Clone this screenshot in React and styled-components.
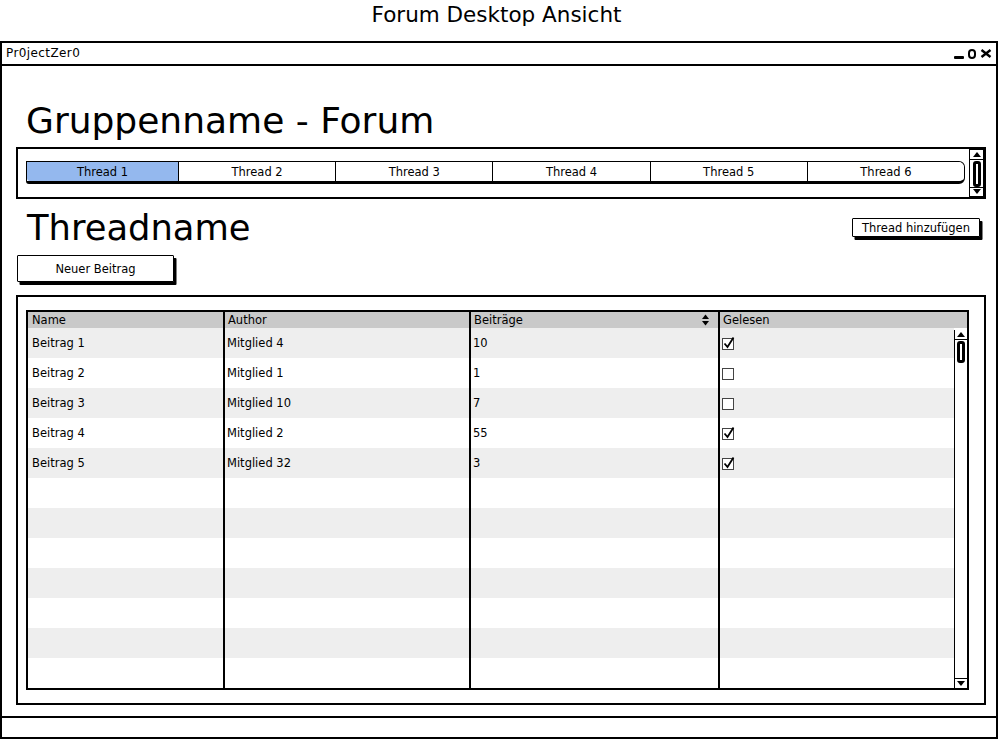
import styled, { createGlobalStyle } from 'styled-components';

const GlobalStyle = createGlobalStyle`
  html, body {
    margin: 0;
    padding: 0;
    background: #fff;
  }
  body {
    width: 1000px;
    height: 741px;
    overflow: hidden;
    font-family: 'DejaVu Sans', sans-serif;
    color: #000;
  }
`;

const Page = styled.div`
  display: flex;
  flex-direction: column;
  width: 1000px;
  height: 741px;
`;

const Caption = styled.div`
  box-sizing: border-box;
  height: 41px;
  padding: 4px 7px 0 0;
  text-align: center;
  font-size: 21.5px;
  line-height: 22px;
`;

const Window = styled.div`
  box-sizing: border-box;
  width: 998px;
  height: 698px;
  border: 2px solid #000;
  display: flex;
  flex-direction: column;
`;

const TitleBar = styled.div`
  height: 21px;
  border-bottom: 2px solid #000;
  display: flex;
  align-items: center;
  justify-content: space-between;
  padding: 0 4px;
  font-size: 12px;
  line-height: 21px;
  letter-spacing: 0.4px;
`;

const Controls = styled.div`
  display: flex;
  align-items: center;
  gap: 4px;
  height: 21px;
`;

const MinBar = styled.span`
  width: 10px;
  height: 3px;
  margin-top: 8px;
  background: #000;
  border-radius: 1px;
`;

const Content = styled.div`
  flex: 1;
  display: flex;
  flex-direction: column;
  padding: 0 10px 0 14px;
`;

const Heading = styled.h1`
  margin: ${(p) => p.$top}px 0 0 ${(p) => p.$left}px;
  font-size: ${(p) => p.$size}px;
  line-height: ${(p) => p.$size}px;
  font-weight: normal;
`;

const TabBox = styled.div`
  box-sizing: border-box;
  height: 52px;
  margin-top: 8px;
  border: 2px solid #000;
  display: flex;
`;

const TabStrip = styled.div`
  flex: 1;
  display: flex;
  height: 19px;
  margin: 12px 4px 0 8px;
  border-top: 1px solid #000;
  border-bottom: 3px solid #000;
  border-left: 1px solid #000;
  border-right: 1.5px solid #000;
  border-radius: 0 6px 6px 3px;
`;

const Tab = styled.div`
  flex: ${(p) => (p.$first ? '0 0 151px' : 1)};
  display: flex;
  justify-content: center;
  align-items: center;
  font-size: 11.5px;
  background: ${(p) => (p.$active ? '#94b8ee' : '#fff')};
  border-left: ${(p) => (p.$first ? 'none' : '1px solid #000')};
  border-radius: ${(p) => (p.$first ? '0 0 0 3px' : p.$last ? '0 6px 6px 0' : '0')};
`;

const ScrollTrack = styled.div`
  box-sizing: border-box;
  width: ${(p) => p.$w}px;
  display: flex;
  flex-direction: column;
  background: #fff;
  border: 1.5px solid #000;
`;

const ArrowCell = styled.div`
  height: 9px;
  display: flex;
  justify-content: center;
  align-items: center;
  ${(p) => (p.$up ? 'border-bottom: 1px solid #000;' : 'border-top: 1px solid #000;')}
`;

const ThumbArea = styled.div`
  flex: 1;
  display: flex;
  justify-content: center;
  padding-top: 1px;
`;

const Thumb = styled.div`
  box-sizing: border-box;
  width: 8px;
  height: ${(p) => p.$h}px;
  border: 3px solid #000;
  border-radius: 3px;
  background: #fff;
`;

const ThreadRow = styled.div`
  display: flex;
  justify-content: space-between;
  align-items: flex-start;
  margin-top: 11px;
`;

const Button = styled.button`
  box-sizing: border-box;
  width: ${(p) => p.$w}px;
  height: ${(p) => p.$h}px;
  margin: ${(p) => p.$margin};
  background: #fff;
  border: 1px solid #000;
  box-shadow: 2.5px 3px 0 #000;
  border-radius: 1px;
  font-family: 'DejaVu Sans', sans-serif;
  font-size: 11.5px;
  color: #000;
  padding: 0;
`;

const Panel = styled.div`
  box-sizing: border-box;
  height: 410px;
  margin-top: 13px;
  border: 2px solid #000;
  padding: 13px 15px 13px 8px;
  display: flex;
`;

const Table = styled.div`
  flex: 1;
  border: 2px solid #000;
  display: flex;
  flex-direction: column;
`;

const cols = '195px 246px 249px 1fr';

const HeaderRow = styled.div`
  display: grid;
  grid-template-columns: ${cols};
  height: 16px;
  background: #c9c9c9;
`;

const HeadCell = styled.div`
  display: flex;
  align-items: center;
  justify-content: space-between;
  padding: 0 9px 0 ${(p) => (p.$first ? 4 : 3)}px;
  font-size: 11.5px;
  line-height: 16px;
  border-left: ${(p) => (p.$first ? 'none' : '2px solid #000')};
`;

const Body = styled.div`
  flex: 1;
  display: flex;
  min-height: 0;
`;

const Rows = styled.div`
  flex: 1;
  display: flex;
  flex-direction: column;
`;

const Row = styled.div`
  display: grid;
  grid-template-columns: ${cols};
  height: 30px;
  background: ${(p) => (p.$shaded ? '#eeeeee' : '#fff')};
`;

const Cell = styled.div`
  display: flex;
  align-items: center;
  padding-left: ${(p) => (p.$first ? 4 : 2)}px;
  font-size: 11.5px;
  border-left: ${(p) => (p.$first ? 'none' : '2px solid #000')};
`;

const TableScroll = styled(ScrollTrack)`
  border-width: 0 0 0 1.5px;
  margin-top: 2px;
`;

const StatusBar = styled.div`
  height: 19px;
  border-top: 2px solid #000;
`;

const Arrow = ({ up }) => (
  <svg width="8" height="5" viewBox="0 0 8 5">
    <polygon points={up ? '0,5 4,0 8,5' : '0,0 8,0 4,5'} fill="#000" />
  </svg>
);

const Scrollbar = ({ w, thumb, as }) => {
  const Track = as || ScrollTrack;
  return (
    <Track $w={w}>
      <ArrowCell $up>
        <Arrow up />
      </ArrowCell>
      <ThumbArea>
        <Thumb $h={thumb} />
      </ThumbArea>
      <ArrowCell>
        <Arrow />
      </ArrowCell>
    </Track>
  );
};

const SortIcon = () => (
  <svg width="7" height="12" viewBox="0 0 7 12">
    <polygon points="0,5 3.5,0.5 7,5" fill="#000" />
    <polygon points="0,7 7,7 3.5,11.5" fill="#000" />
  </svg>
);

const Check = ({ checked }) => (
  <svg width="13" height="14" viewBox="0 0 13 14">
    <rect x="0.5" y="2.5" width="11" height="11" fill="#fff" stroke="#444" />
    {checked && (
      <path d="M2.5 7.5 L5.5 11 L11.5 1.5" fill="none" stroke="#000" strokeWidth="1.8" />
    )}
  </svg>
);

const MaxIcon = () => (
  <svg width="8" height="10" viewBox="0 0 8 10" style={{ marginTop: 1 }}>
    <rect x="1" y="1" width="6" height="8" rx="3" fill="none" stroke="#000" strokeWidth="2" />
  </svg>
);

const CloseIcon = () => (
  <svg width="12" height="9" viewBox="0 0 12 9">
    <path d="M1.5 1 L10.5 8 M10.5 1 L1.5 8" stroke="#000" strokeWidth="2.4" />
  </svg>
);

const threads = ['Thread 1', 'Thread 2', 'Thread 3', 'Thread 4', 'Thread 5', 'Thread 6'];

const posts = [
  { name: 'Beitrag 1', author: 'Mitglied 4', count: '10', read: true },
  { name: 'Beitrag 2', author: 'Mitglied 1', count: '1', read: false },
  { name: 'Beitrag 3', author: 'Mitglied 10', count: '7', read: false },
  { name: 'Beitrag 4', author: 'Mitglied 2', count: '55', read: true },
  { name: 'Beitrag 5', author: 'Mitglied 32', count: '3', read: true },
];

const App = () => {
  const rows = Array.from({ length: 12 }, (_, i) => posts[i] || null);

  return (
    <>
      <GlobalStyle />
      <Page>
        <Caption>Forum Desktop Ansicht</Caption>
        <Window>
          <TitleBar>
            <span>Pr0jectZer0</span>
            <Controls>
              <MinBar />
              <MaxIcon />
              <CloseIcon />
            </Controls>
          </TitleBar>
          <Content>
            <Heading $top={37} $left={10} $size={36}>
              Gruppenname - Forum
            </Heading>
            <TabBox>
              <TabStrip>
                {threads.map((t, i) => (
                  <Tab key={t} $active={i === 0} $first={i === 0} $last={i === threads.length - 1}>
                    {t}
                  </Tab>
                ))}
              </TabStrip>
              <Scrollbar w={15} thumb={26} />
            </TabBox>
            <ThreadRow>
              <Heading $top={0} $left={11} $size={35.3}>
                Threadname
              </Heading>
              <Button $w={128} $h={19} $margin="8px 6px 0 0">
                Thread hinzufügen
              </Button>
            </ThreadRow>
            <Button $w={157} $h={27} $margin="10px 0 0 1px">
              Neuer Beitrag
            </Button>
            <Panel>
              <Table>
                <HeaderRow>
                  <HeadCell $first>Name</HeadCell>
                  <HeadCell>Author</HeadCell>
                  <HeadCell>
                    Beiträge
                    <SortIcon />
                  </HeadCell>
                  <HeadCell>Gelesen</HeadCell>
                </HeaderRow>
                <Body>
                  <Rows>
                    {rows.map((r, i) => (
                      <Row key={i} $shaded={i % 2 === 0}>
                        <Cell $first>{r && r.name}</Cell>
                        <Cell>{r && r.author}</Cell>
                        <Cell>{r && r.count}</Cell>
                        <Cell>{r && <Check checked={r.read} />}</Cell>
                      </Row>
                    ))}
                  </Rows>
                  <Scrollbar w={13} thumb={22} as={TableScroll} />
                </Body>
              </Table>
            </Panel>
          </Content>
          <StatusBar />
        </Window>
      </Page>
    </>
  );
};

export default App;
